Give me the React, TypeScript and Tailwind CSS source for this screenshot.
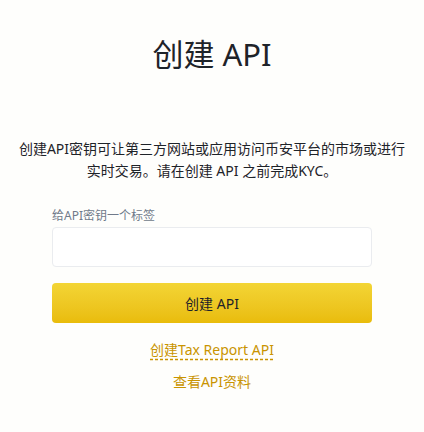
export default function App() {
  return (
    <div
      className="min-h-[432px] w-full bg-[#fefefc] text-[#1e2329]"
      style={{ fontFamily: '"Noto Sans", "Noto Sans CJK SC", sans-serif' }}
    >
      <div className="flex flex-col items-center pt-[34px]">
        <h1 className="text-[31px] leading-[40px] font-normal">创建 API</h1>

        <p className="mt-[64px] text-center text-[14px] leading-[22px] text-[#1e2329]">
          创建API密钥可让第三方网站或应用访问币安平台的市场或进行
          <br />
          实时交易。请在创建 API 之前完成KYC。
        </p>

        <div className="mt-[25px] flex w-[320px] flex-col">
          <label className="text-[12px] leading-[18px] text-[#707a8a]">给API密钥一个标签</label>
          <input
            className="mt-[2px] h-[40px] w-full rounded-[4px] border border-[#eaecef] bg-white px-3 text-[14px] outline-none"
            type="text"
          />
          <button className="mt-[16px] h-[40px] w-full rounded-[4px] bg-gradient-to-b from-[#f3d534] to-[#e9bc0a] text-[14px] text-[#1e2329]">
            创建 API
          </button>
        </div>

        <a className="mt-[16px] text-[14px] leading-[22px] text-[#c99400] underline decoration-dashed underline-offset-[4px]">
          创建Tax Report API
        </a>
        <a className="mt-[10px] text-[14px] leading-[22px] text-[#c99400]">查看API资料</a>
      </div>
    </div>
  );
}
